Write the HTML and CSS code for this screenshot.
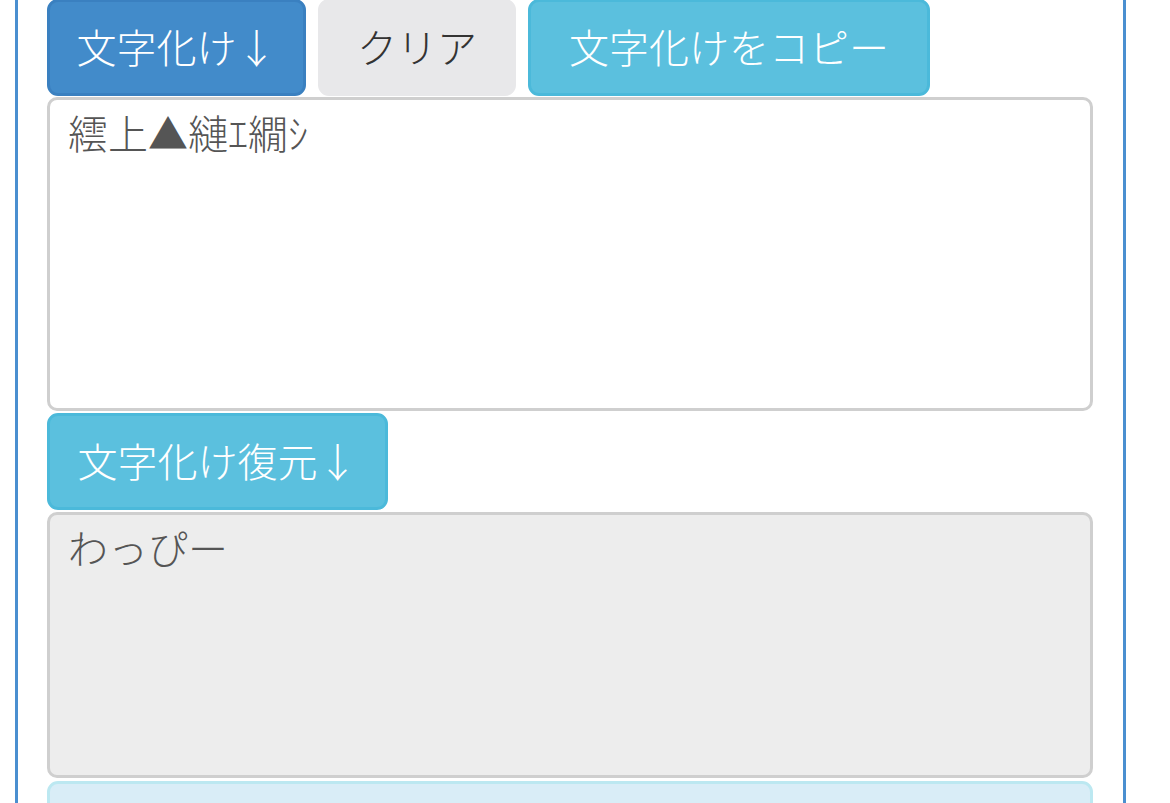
FILE: index.html
```html
<!DOCTYPE html>
<html>
  <head>
    <meta name="viewport" content="width=device-width,initial-scale=1.0">
    <title>文字化けツール</title>
    <link rel="stylesheet" href="styles.css">
  </head>
  <body>
    <div class="panel">
      <div class="btn-row">
        <button class="btn btn-primary btn-garble">文字化け<span class="arrow">↓</span></button>
        <button class="btn btn-default btn-clear">クリア</button>
        <button class="btn btn-info btn-copy">文字化けをコピー</button>
      </div>
      <textarea class="text-box text-garbled">繧上▲縺ｴ繝ｼ</textarea>
      <div class="btn-row">
        <button class="btn btn-info btn-restore">文字化け復元<span class="arrow">↓</span></button>
      </div>
      <textarea class="text-box text-restored" readonly>わっぴー</textarea>
      <div class="info-box"></div>
    </div>
  </body>
</html>
```

FILE: styles.css
```css
body {
  margin: 0;
  background: #fff;
  font-family: "Noto Sans CJK JP", "Noto Sans", sans-serif;
  overflow: hidden;
}
.panel {
  margin-left: 15px;
  width: 1111px;
  height: 820px;
  box-sizing: border-box;
  border-left: 3px solid #4a8fd0;
  border-right: 3px solid #4a8fd0;
  padding: 0 30px 0 29px;
}
.btn-row {
  display: flex;
  gap: 12px;
}
.btn-row:first-child {
  margin-top: -1px;
}
.btn {
  font-family: inherit;
  font-size: 40px;
  font-weight: 300;
  line-height: 57px;
  padding: 16px 0 18px;
  border: 3px solid transparent;
  border-radius: 11px;
  text-align: center;
  cursor: pointer;
}
.arrow {
  font-feature-settings: "palt";
}
.btn-primary {
  background: #428bca;
  border-color: #3a80c0;
  color: #fff;
}
.btn-default {
  background: #e8e8ea;
  border-color: #e8e8ea;
  color: #333;
}
.btn-info {
  background: #5bc0de;
  border-color: #4bb9da;
  color: #fff;
}
.btn-garble {
  width: 259px;
}
.btn-clear {
  width: 198px;
}
.btn-copy {
  width: 402px;
}
.btn-restore {
  width: 341px;
}
.text-box {
  display: block;
  width: 100%;
  box-sizing: border-box;
  margin: 1px 0 2px;
  padding: 4px 18px;
  border: 3px solid #cfcfcf;
  border-radius: 10px;
  font-family: inherit;
  font-size: 40px;
  font-weight: 300;
  line-height: 57px;
  color: #555;
  resize: none;
  outline: none;
}
.text-garbled {
  height: 314px;
  background: #fff;
}
.text-restored {
  height: 266px;
  margin-top: 2px;
  background: #ededed;
}
.info-box {
  margin-top: 3px;
  height: 120px;
  background: #d9edf7;
  border: 3px solid #bce8f1;
  border-radius: 11px;
}
```
